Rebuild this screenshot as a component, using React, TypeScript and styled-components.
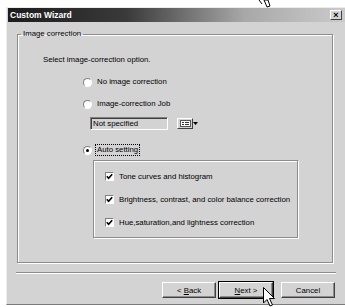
import React from 'react';
import styled, { createGlobalStyle, css } from 'styled-components';

const GlobalStyle = createGlobalStyle`
  html, body {
    margin: 0;
    padding: 0;
    background: #fff;
  }
  body {
    font-family: "Liberation Sans", Arial, sans-serif;
    font-size: 7.8px;
    color: #000;
  }
`;

const Page = styled.div`
  position: relative;
  width: 345px;
  height: 307px;
  overflow: hidden;
  padding: 7px 0 0 6px;
  box-sizing: border-box;
`;

const Window = styled.div`
  width: 340px;
  height: 298px;
  box-sizing: border-box;
  background: #d3d3d3;
  border-top: 1px solid #ececec;
  border-left: 1px solid #ececec;
  border-bottom: 1px solid #7a7a7a;
  display: flex;
  flex-direction: column;
`;

const TitleBar = styled.div`
  height: 14px;
  margin-left: 1px;
  display: flex;
  align-items: center;
  justify-content: space-between;
  background: linear-gradient(to right, #1c1c1c 0%, #3a3a3a 35%, #a8a8a8 70%, #cbcbcb 100%);
`;

const Title = styled.span`
  padding-left: 2px;
  color: #fff;
  font-weight: bold;
  font-size: 8.5px;
`;

const CloseButton = styled.span`
  width: 12px;
  height: 10px;
  margin-right: 4px;
  box-sizing: border-box;
  display: flex;
  align-items: center;
  justify-content: center;
  background: #d3d3d3;
  border: 1px solid;
  border-color: #fff #404040 #404040 #fff;
  font-size: 9px;
  line-height: 8px;
  font-weight: bold;
`;

const Body = styled.div`
  padding: 7px 0 0 10px;
  display: flex;
  flex-direction: column;
`;

const GroupBox = styled.fieldset`
  width: 316px;
  height: 234px;
  margin: 0;
  padding: 0;
  box-sizing: border-box;
  border: 1px solid #8c8c8c;
  box-shadow: 1px 1px 0 #fff, inset 1px 1px 0 #fff;
`;

const Legend = styled.legend`
  margin-left: 3px;
  padding: 0 2px;
  line-height: 10px;
`;

const Prompt = styled.div`
  margin: 16px 0 0 25px;
  line-height: 10px;
`;

const Options = styled.div`
  margin-left: 65px;
  display: flex;
  flex-direction: column;
`;

const OptionRow = styled.label<{ $gap: number }>`
  display: flex;
  align-items: center;
  height: 10px;
  margin-top: ${(p) => p.$gap}px;
`;

const Radio = styled.span<{ $checked?: boolean }>`
  width: 9px;
  height: 9px;
  box-sizing: border-box;
  border-radius: 50%;
  border: 1px solid;
  border-color: #808080 #fff #fff #808080;
  background: #fff;
  display: flex;
  align-items: center;
  justify-content: center;
  margin-right: 4px;
  &::after {
    content: '';
    width: 3px;
    height: 3px;
    border-radius: 50%;
    background: ${(p) => (p.$checked ? '#000' : 'transparent')};
  }
`;

const Label = styled.span<{ $focused?: boolean }>`
  line-height: 10px;
  padding: 0 1px;
  ${(p) =>
    p.$focused &&
    css`
      outline: 1px dotted #000;
    `}
`;

const JobRow = styled.div`
  display: flex;
  align-items: center;
  margin: 8px 0 0 7px;
`;

const TextField = styled.div`
  width: 78px;
  height: 13px;
  box-sizing: border-box;
  padding-left: 2px;
  line-height: 11px;
  background: #d3d3d3;
  border: 1px solid;
  border-color: #808080 #fff #fff #808080;
  box-shadow: inset 1px 1px 0 #404040;
`;

const DropButton = styled.span`
  display: flex;
  align-items: center;
  margin-left: 9px;
`;

const DropFace = styled.span`
  width: 16px;
  height: 11px;
  box-sizing: border-box;
  display: flex;
  align-items: center;
  justify-content: center;
  border: 1px solid;
  border-color: #fff #404040 #404040 #fff;
`;

const AutoBox = styled.div`
  width: 205px;
  height: 78px;
  margin: 5px 0 0 10px;
  padding: 10px 0 0 11px;
  box-sizing: border-box;
  border: 1px solid #8c8c8c;
  box-shadow: 1px 1px 0 #fff, inset 1px 1px 0 #fff;
  display: flex;
  flex-direction: column;
  gap: 13px;
`;

const CheckRow = styled.label`
  display: flex;
  align-items: center;
  height: 10px;
`;

const CheckBox = styled.span`
  width: 9px;
  height: 9px;
  box-sizing: border-box;
  border: 1px solid;
  border-color: #808080 #fff #fff #808080;
  background: #fff;
  display: flex;
  align-items: center;
  justify-content: center;
  margin-right: 5px;
`;

const Separator = styled.div`
  width: 320px;
  margin: 9px 0 0 -1px;
  border-top: 1px solid #8c8c8c;
  border-bottom: 1px solid #fff;
`;

const ButtonRow = styled.div`
  display: flex;
  margin: 8px 0 0 145px;
`;

const Button = styled.button<{ $default?: boolean; $space?: number }>`
  width: 54px;
  height: 16px;
  margin-left: ${(p) => p.$space ?? 0}px;
  padding: 0;
  font-family: "Liberation Sans", Arial, sans-serif;
  font-size: 7.8px;
  color: #000;
  background: #d3d3d3;
  border: 1px solid;
  border-color: #fff #404040 #404040 #fff;
  box-shadow: inset -1px -1px 0 #8c8c8c;
  ${(p) =>
    p.$default &&
    css`
      outline: 1px solid #000;
    `}
  u {
    text-decoration: underline;
  }
`;

const Pointer = styled.svg<{ $x: number; $y: number }>`
  position: absolute;
  left: ${(p) => p.$x}px;
  top: ${(p) => p.$y}px;
`;

const Check = () => (
  <svg width="7" height="7" viewBox="0 0 7 7">
    <polyline points="0.8,3.2 2.6,5.2 6.2,1.2" fill="none" stroke="#000" strokeWidth="1.6" />
  </svg>
);

const ListIcon = () => (
  <svg width="11" height="7" viewBox="0 0 11 7">
    <rect x="0.5" y="0.5" width="10" height="6" fill="#fff" stroke="#555" />
    <line x1="2" y1="2.5" x2="4" y2="2.5" stroke="#333" />
    <line x1="5" y1="2.5" x2="9" y2="2.5" stroke="#333" />
    <line x1="2" y1="4.5" x2="4" y2="4.5" stroke="#333" />
    <line x1="5" y1="4.5" x2="9" y2="4.5" stroke="#333" />
  </svg>
);

const Arrow = () => (
  <svg width="5" height="3" viewBox="0 0 5 3">
    <polygon points="0,0 5,0 2.5,3" fill="#000" />
  </svg>
);

const App: React.FC = () => {
  return (
    <Page>
      <GlobalStyle />
      <Window>
        <TitleBar>
          <Title>Custom Wizard</Title>
          <CloseButton>×</CloseButton>
        </TitleBar>
        <Body>
          <GroupBox>
            <Legend>Image correction</Legend>
            <Prompt>Select image-correction option.</Prompt>
            <Options>
              <OptionRow $gap={12}>
                <Radio />
                <Label>No image correction</Label>
              </OptionRow>
              <OptionRow $gap={12}>
                <Radio />
                <Label>Image-correction Job</Label>
              </OptionRow>
              <JobRow>
                <TextField>Not specified</TextField>
                <DropButton>
                  <DropFace>
                    <ListIcon />
                  </DropFace>
                  <Arrow />
                </DropButton>
              </JobRow>
              <OptionRow $gap={15}>
                <Radio $checked />
                <Label $focused>Auto setting</Label>
              </OptionRow>
              <AutoBox>
                <CheckRow>
                  <CheckBox>
                    <Check />
                  </CheckBox>
                  Tone curves and histogram
                </CheckRow>
                <CheckRow>
                  <CheckBox>
                    <Check />
                  </CheckBox>
                  Brightness, contrast, and color balance correction
                </CheckRow>
                <CheckRow>
                  <CheckBox>
                    <Check />
                  </CheckBox>
                  Hue,saturation,and lightness correction
                </CheckRow>
              </AutoBox>
            </Options>
          </GroupBox>
          <Separator />
          <ButtonRow>
            <Button>
              &lt; <u>B</u>ack
            </Button>
            <Button $default $space={3}>
              <u>N</u>ext &gt;
            </Button>
            <Button $space={8}>Cancel</Button>
          </ButtonRow>
        </Body>
      </Window>
      <Pointer $x={258} $y={0} width="16" height="9" viewBox="0 0 16 9">
        <polyline points="1,0 4,4" fill="none" stroke="#000" strokeWidth="1" />
        <polygon points="6,0 9,7 12,6 10,0" fill="#fff" stroke="#000" strokeWidth="1" />
      </Pointer>
      <Pointer $x={263} $y={287} width="13" height="20" viewBox="0 0 13 20">
        <polygon
          points="0.5,0.5 0.5,16 4,12.5 7,19 9.5,18 6.5,11.5 11.5,11.5"
          fill="#fff"
          stroke="#000"
          strokeWidth="1"
          strokeLinejoin="miter"
        />
      </Pointer>
    </Page>
  );
};

export default App;
